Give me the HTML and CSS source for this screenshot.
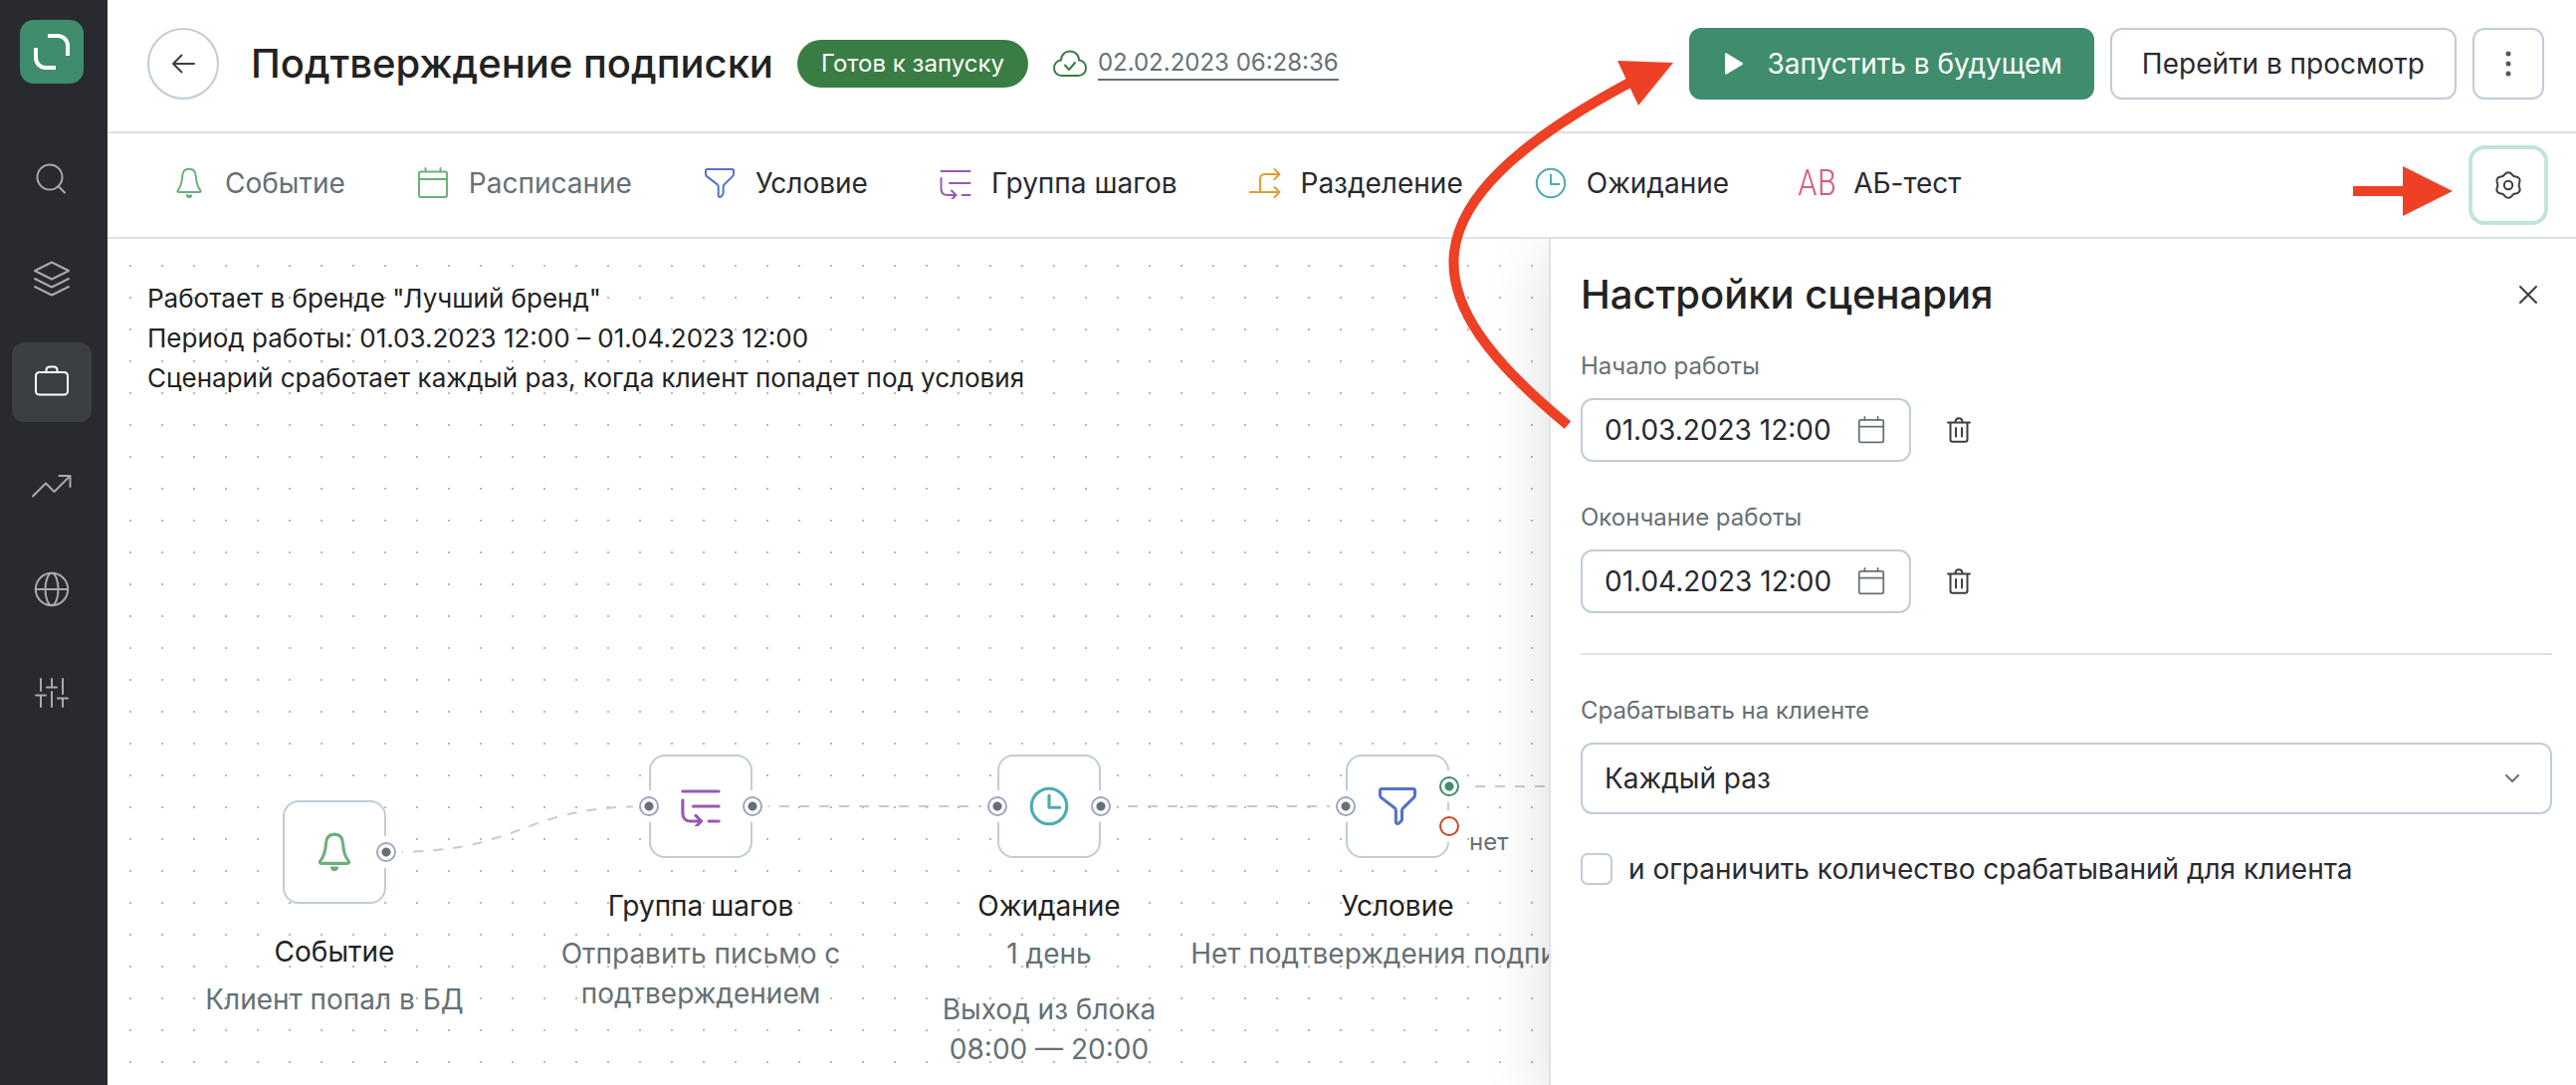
FILE: index.html
```html
<!DOCTYPE html>
<html lang="ru">
<head>
<meta charset="utf-8">
<meta name="viewport" content="width=device-width, initial-scale=1">
<title>Подтверждение подписки</title>
<link rel="stylesheet" href="styles.css">
</head>
<body>
<svg class="sprite" aria-hidden="true">
  <symbol id="i-bell" viewBox="0 1 32 32"><path d="M16 2.700c-4.800 0-6.600 3.300-6.800 7.300-.4 7-1.400 10.200-4.500 14.100-.8 1-.3 2 .8 2h21c1.100 0 1.600-1 .8-2-3.100-3.900-4.100-7.100-4.500-14.100-.2-4-2-7.300-6.800-7.300z"/><path d="M13.200 29h5.600a2.800 2.800 0 0 1-5.600 0z" fill="currentColor" stroke-width="1"/></symbol>
  <symbol id="i-cal" viewBox="0 0 32 32"><rect x="2" y="4.500" width="28" height="25.500" rx="2"/><path d="M2 12h28M8.500 1v3.500M23.500 1v3.500"/></symbol>
  <symbol id="i-filter" viewBox="0 0 32 32"><path d="M3.500 2h25c1 0 1.500.6 1.500 1.500v3.200c0 1-.3 1.700-1 2.400l-8.500 8.400c-.6.600-.9 1.200-.9 2.100v6.500c0 .8-.2 1.300-.8 1.900l-1.500 1.500c-1 1-2.600.4-2.600-1v-9c0-.9-.3-1.500-.9-2.100L3 9.100c-.7-.7-1-1.400-1-2.400V3.500C2 2.600 2.500 2 3.500 2z"/></symbol>
  <symbol id="i-group" viewBox="0 0 32 32"><path d="M1.500 4h29M10 16h20.500M22.500 28h8M1.500 11v10.500c0 4 2.500 6.500 6.500 6.500h8M12 23.500l4.500 4.500-4.500 4.500"/></symbol>
  <symbol id="i-split" viewBox="0 0 32 32"><path d="M0 25h30M11 25V12c0-3 2-5 5-5h14M25.500 2l5 5-5 5M25.500 20l5 5-5 5"/></symbol>
  <symbol id="i-clock" viewBox="0 0 32 32"><circle cx="16" cy="16" r="14.200"/><path d="M16 7.500V17h8.500"/></symbol>
  <symbol id="i-trash" viewBox="0 0 32 32"><path d="M5 8.500h22M7.500 8.500v17c0 1.400.8 2.200 2.200 2.200h12.600c1.400 0 2.200-.8 2.200-2.200v-17M12.500 8c0-2.500 1.300-3.700 3.500-3.700s3.500 1.200 3.500 3.700M13 14v8.500M19 14v8.500"/></symbol>
</svg>

<div class="app">
  <nav class="sidebar" aria-label="Разделы">
    <a class="logo" href="#" aria-label="Главная"><svg viewBox="0 0 64 64" width="64" height="64"><path d="M28 16h10a10 10 0 0 1 10 10v10M16 28v10a10 10 0 0 0 10 10h10"/></svg></a>
    <a class="side-link" href="#" aria-label="Поиск"><svg viewBox="0 0 40 40" width="40" height="40"><circle cx="18" cy="22" r="12.500"/><path d="M26.500 31l6.500 6.500"/></svg></a>
    <a class="side-link" href="#" aria-label="Слои"><svg viewBox="0 0 40 40" width="40" height="40"><path d="M20 3.500l17 8.500-17 8.500L3 12zM3 20l17 8.500L37 20M3 28l17 8.500L37 28"/></svg></a>
    <a class="side-link side-link--active" href="#" aria-label="Кампании"><svg viewBox="0 0 40 40" width="40" height="40"><rect x="4" y="10" width="32" height="22.500" rx="3.500"/><path d="M14.500 10V8c0-2 1.500-3.500 3.500-3.500h4c2 0 3.500 1.500 3.500 3.500v2"/></svg></a>
    <a class="side-link" href="#" aria-label="Отчёты"><svg viewBox="0 0 40 40" width="40" height="40"><path d="M1 30.500l13-13 8.500 8.500L38 10.500M27.500 10H38.500V21"/></svg></a>
    <a class="side-link" href="#" aria-label="Сайты"><svg viewBox="0 0 40 40" width="40" height="40"><circle cx="20" cy="20" r="16.200"/><path d="M4 20h32"/><ellipse cx="20" cy="20" rx="6.500" ry="16.200"/></svg></a>
    <a class="side-link" href="#" aria-label="Настройки"><svg viewBox="0 0 40 40" width="40" height="40"><path d="M9 6v12M9 23v11M4 22.500h10M20 6v8M15 14.500h10M20 19v15M31 6v15M31 26v8M26 25.500h10"/></svg></a>
  </nav>

  <main class="main">
    <header class="header">
      <button class="back" type="button" aria-label="Назад"><svg viewBox="0 0 32 32" width="32" height="32"><path d="M27 16H6M14.500 7.500L6 16l8.500 8.500"/></svg></button>
      <h1 class="title">Подтверждение подписки</h1>
      <span class="badge">Готов к запуску</span>
      <div class="saved">
        <svg class="cloud" viewBox="0 0 36 36" width="36" height="36"><path d="M9.500 30h17c4.700 0 7.500-3.700 7.500-7.700 0-4.300-3-7.500-7-7.700C27 9 23 5.500 18 5.500S9 9 9 14.600c-4 .2-7 3.400-7 7.700C2 26.300 4.800 30 9.500 30z"/><path d="M13 19.500l4 4.500 6-7"/></svg>
        <a class="saved-date" href="#">02.02.2023 06:28:36</a>
      </div>
      <div class="actions">
        <button class="btn btn--primary" type="button"><svg viewBox="0 0 24 24" width="24" height="24"><path d="M4 2.500v19c0 1 1 1.500 1.800 1L21.500 13c.8-.5.8-1.500 0-2L5.800 1.500C5 1 4 1.500 4 2.500z"/></svg>Запустить в будущем</button>
        <button class="btn" type="button">Перейти в просмотр</button>
        <button class="btn btn--icon" type="button" aria-label="Ещё"><svg viewBox="0 0 32 32" width="32" height="32"><circle cx="16" cy="6" r="2.500"/><circle cx="16" cy="16" r="2.500"/><circle cx="16" cy="26" r="2.500"/></svg></button>
      </div>
    </header>

    <div class="toolbar">
      <div class="steps">
        <button class="step step--muted" type="button"><svg class="icon c-green"><use href="#i-bell"/></svg>Событие</button>
        <button class="step step--muted" type="button"><svg class="icon c-green"><use href="#i-cal"/></svg>Расписание</button>
        <button class="step" type="button"><svg class="icon c-blue"><use href="#i-filter"/></svg>Условие</button>
        <button class="step" type="button"><svg class="icon c-purple"><use href="#i-group"/></svg>Группа шагов</button>
        <button class="step" type="button"><svg class="icon c-orange"><use href="#i-split"/></svg>Разделение</button>
        <button class="step" type="button"><svg class="icon c-teal"><use href="#i-clock"/></svg>Ожидание</button>
        <button class="step" type="button"><span class="ab" aria-hidden="true">AB</span>АБ-тест</button>
      </div>
      <button class="gear" type="button" aria-label="Настройки сценария"><svg viewBox="0 0 32 32" width="32" height="32"><circle cx="16" cy="16" r="4.200"/><path d="M16 3.200C19.400 3.200 19.200 5.600 21.300 6.800C23.400 8 25.400 6.700 27.100 9.600C28.800 12.500 26.600 13.600 26.600 16C26.600 18.400 28.800 19.500 27.100 22.400C25.400 25.300 23.400 24 21.300 25.200C19.200 26.400 19.400 28.800 16 28.800C12.600 28.800 12.800 26.400 10.700 25.200C8.600 24 6.600 25.300 4.900 22.400C3.200 19.500 5.400 18.400 5.400 16C5.400 13.600 3.200 12.500 4.900 9.600C6.600 6.700 8.600 8 10.700 6.800C12.800 5.600 12.600 3.200 16 3.200z"/></svg></button>
    </div>

    <div class="workspace">
      <section class="canvas" aria-label="Схема сценария">
        <p class="summary">Работает в бренде "Лучший бренд"<br>Период работы: 01.03.2023 12:00 – 01.04.2023 12:00<br>Сценарий сработает каждый раз, когда клиент попадет под условия</p>

        <svg class="edges" width="1800" height="850" aria-hidden="true">
          <path d="M287 616C420 616 412 570 544 570"/>
          <path d="M655 570H894"/>
          <path d="M1005 570H1244"/>
          <path d="M1354 550H1800"/>
        </svg>

        <article class="node node--event">
          <div class="node-box c-green"><svg class="node-icon"><use href="#i-bell"/></svg><i class="port port--out"></i></div>
          <h2 class="node-title">Событие</h2>
          <p class="node-text">Клиент попал в БД</p>
        </article>
        <article class="node node--group">
          <div class="node-box c-purple"><svg class="node-icon"><use href="#i-group"/></svg><i class="port port--in"></i><i class="port port--out"></i></div>
          <h2 class="node-title">Группа шагов</h2>
          <p class="node-text">Отправить письмо с подтверждением</p>
        </article>
        <article class="node node--wait">
          <div class="node-box c-teal"><svg class="node-icon"><use href="#i-clock"/></svg><i class="port port--in"></i><i class="port port--out"></i></div>
          <h2 class="node-title">Ожидание</h2>
          <p class="node-text">1 день</p>
          <p class="node-text node-text--extra">Выход из блока<br>08:00 — 20:00</p>
        </article>
        <article class="node node--condition">
          <div class="node-box c-blue"><svg class="node-icon"><use href="#i-filter"/></svg><i class="port port--in"></i><i class="port port--yes"></i><i class="port port--no"></i><span class="port-label">нет</span></div>
          <h2 class="node-title">Условие</h2>
          <p class="node-text node-text--line">Нет подтверждения подписки</p>
        </article>
      </section>

      <aside class="panel">
        <div class="panel-head">
          <h2 class="panel-title">Настройки сценария</h2>
          <button class="plain" type="button" aria-label="Закрыть"><svg viewBox="0 0 32 32" width="32" height="32"><path d="M8 8l16 16M24 8L8 24"/></svg></button>
        </div>

        <label class="label" for="start">Начало работы</label>
        <div class="date-row">
          <div class="date"><input id="start" type="text" value="01.03.2023 12:00"><svg class="date-icon"><use href="#i-cal"/></svg></div>
          <button class="plain" type="button" aria-label="Очистить начало работы"><svg width="32" height="32"><use href="#i-trash"/></svg></button>
        </div>

        <label class="label label--next" for="end">Окончание работы</label>
        <div class="date-row">
          <div class="date"><input id="end" type="text" value="01.04.2023 12:00"><svg class="date-icon"><use href="#i-cal"/></svg></div>
          <button class="plain" type="button" aria-label="Очистить окончание работы"><svg width="32" height="32"><use href="#i-trash"/></svg></button>
        </div>

        <hr class="divider">

        <label class="label" for="mode">Срабатывать на клиенте</label>
        <div class="select">
          <select id="mode"><option>Каждый раз</option><option>Один раз</option></select>
          <svg class="chevron" viewBox="0 0 32 32" width="32" height="32"><path d="M10 13l6 6 6-6"/></svg>
        </div>

        <label class="check"><input type="checkbox">и ограничить количество срабатываний для клиента</label>
      </aside>
    </div>
  </main>

  <svg class="arrow-curve" viewBox="0 0 260 400" width="260" height="400" aria-hidden="true"><path class="stroke" d="M135 387C-22 258 -33 166 199 42"/><path d="M185 21l56 2-35 43z"/></svg>
  <svg class="arrow-short" viewBox="0 0 100 50" width="100" height="50" aria-hidden="true"><path d="M0 20h50V0l50 25-50 25V30H0z"/></svg>
</div>
</body>
</html>
```
FILE: styles.css
```css
* { box-sizing: border-box; }

body {
  margin: 0;
  background: #fff;
  color: #292a2f;
  font-family: Inter, "Noto Sans", sans-serif;
  font-size: 28px;
  line-height: 40px;
}

h1, h2, p { margin: 0; font-weight: 400; }

button, input, select {
  margin: 0;
  padding: 0;
  border: 0;
  background: none;
  color: inherit;
  font: inherit;
}

svg {
  display: block;
  flex: none;
  fill: none;
  stroke: currentColor;
  stroke-width: 2;
  stroke-linecap: round;
  stroke-linejoin: round;
}

.sprite { position: absolute; width: 0; height: 0; }

.c-green { color: #6bb07c; }
.c-blue { color: #5573c9; }
.c-purple { color: #9859b3; }
.c-orange { color: #e19c38; }
.c-teal { color: #4bacb0; }

.app { position: relative; display: flex; min-height: 100vh; }

/* Sidebar */
.sidebar {
  display: flex;
  flex: none;
  flex-direction: column;
  gap: 24px;
  width: 108px;
  padding: 20px 16px 20px 12px;
  background: #292a2f;
}

.logo {
  align-self: center;
  margin-bottom: 28px;
  border-radius: 14px;
  background: #3f8d6c;
  color: #fff;
}

.logo svg { stroke-width: 4; stroke-linecap: butt; }

.side-link {
  display: flex;
  align-items: center;
  justify-content: center;
  height: 80px;
  border-radius: 12px;
  color: #a9aaad;
}

.side-link--active { background: #3b3e42; color: #fff; }

.main { display: flex; flex: 1; flex-direction: column; min-width: 0; }

/* Header */
.header {
  display: flex;
  align-items: center;
  padding: 28px 32px 32px 40px;
  border-bottom: 2px solid #dce3e6;
}

.back {
  display: flex;
  flex: none;
  align-items: center;
  justify-content: center;
  width: 72px;
  height: 72px;
  border: 2px solid #c1ccd6;
  border-radius: 50%;
  color: #3b3e42;
}

.title {
  margin-left: 32px;
  color: #222;
  font-size: 40px;
  font-weight: 500;
  line-height: 48px;
  white-space: nowrap;
}

.badge {
  margin-left: 24px;
  padding: 8px 24px;
  border-radius: 24px;
  background: #3a7d44;
  color: #fff;
  font-size: 24px;
  line-height: 32px;
  white-space: nowrap;
}

.saved { display: flex; align-items: center; gap: 10px; margin-left: 24px; }
.cloud { color: #3a7d44; }

.saved-date {
  border-bottom: 2px solid #667075;
  color: #667075;
  font-size: 24px;
  line-height: 32px;
  text-decoration: none;
  white-space: nowrap;
}

.actions { display: flex; gap: 16px; margin-left: auto; }

.btn {
  display: flex;
  align-items: center;
  justify-content: center;
  gap: 22px;
  height: 72px;
  padding: 0 30px;
  border: 2px solid #c1ccd6;
  border-radius: 12px;
  white-space: nowrap;
}

.btn--primary { border-color: #3f8d6c; background: #3f8d6c; color: #fff; }
.btn--primary svg { fill: currentColor; stroke: none; }
.btn--icon { width: 72px; padding: 0; color: #55585c; }
.btn--icon svg { fill: currentColor; stroke: none; }

/* Step toolbar */
.toolbar {
  position: relative;
  z-index: 2;
  display: flex;
  align-items: center;
  justify-content: space-between;
  padding: 12px 28px 12px 66px;
  border-bottom: 2px solid #dce3e6;
  background: #fff;
}

.steps { display: flex; gap: 72px; padding-bottom: 4px; }
.step { display: flex; align-items: center; gap: 20px; white-space: nowrap; }
.step--muted { color: #667075; }

.icon { width: 32px; height: 32px; overflow: visible; }

.ab {
  margin: 0 -3px;
  color: #d15b89;
  font-family: "Liberation Sans Narrow", "Roboto Condensed", Roboto, sans-serif;
  font-size: 36px;
  font-weight: 300;
}

.gear {
  display: flex;
  align-items: center;
  justify-content: center;
  width: 80px;
  height: 80px;
  border: 4px solid #c0e5d8;
  border-radius: 16px;
  color: #3b3e42;
}

/* Scenario canvas */
.workspace { display: flex; flex: 1; overflow: hidden; }

.canvas {
  position: relative;
  flex: 1;
  min-width: 0;
  min-height: 850px;
  padding: 40px;
  overflow: hidden;
  background: radial-gradient(circle at 1px 1px, #b9b9b9 1px, transparent 1px) 22px 26px / 32px 32px;
}

.summary { color: #222; font-size: 26px; white-space: nowrap; }

.edges {
  position: absolute;
  top: 0;
  left: 0;
  color: #c1ccd6;
  stroke-dasharray: 10 10;
  stroke-linecap: butt;
}

.node {
  position: absolute;
  top: 518px;
  display: flex;
  flex-direction: column;
  align-items: center;
  width: 304px;
  text-align: center;
}

.node--event { top: 564px; left: 76px; }
.node--group { left: 444px; }
.node--wait { left: 794px; }
.node--condition { left: 1144px; }

.node-box {
  position: relative;
  display: flex;
  align-items: center;
  justify-content: center;
  width: 104px;
  height: 104px;
  border: 2px solid #c1ccd6;
  border-radius: 16px;
  background: #fff;
}

.node-icon { width: 40px; height: 40px; overflow: visible; stroke-width: 2.5; }

.port {
  position: absolute;
  top: 40px;
  width: 20px;
  height: 20px;
  border: 2px solid #9fa4c2;
  border-radius: 50%;
  background: radial-gradient(circle, #667075 4px, #fff 5px);
  box-shadow: 0 0 0 6px #fff;
}

.port--in { left: -12px; }
.port--out, .port--yes, .port--no { right: -12px; }
.port--yes { top: 20px; border-color: #3f8d6c; background: radial-gradient(circle, #3f8d6c 4px, #fff 5px); }
.port--no { top: 60px; border-color: #cf4427; background: #fff; }

.port-label {
  position: absolute;
  top: 70px;
  left: 122px;
  color: #667075;
  font-size: 24px;
  line-height: 32px;
}

.node-title { margin-top: 28px; color: #222; font-size: 28px; }
.node-text { margin-top: 8px; color: #667075; }
.node-text--extra { margin-top: 16px; }
.node-text--line { white-space: nowrap; }

/* Settings panel */
.panel {
  position: relative;
  flex: none;
  width: 1032px;
  max-width: 60%;
  padding: 32px 24px 32px 30px;
  border-left: 2px solid #dce3e6;
  background: #fff;
  box-shadow: 0 16px 64px rgba(0, 0, 0, 0.14);
}

.panel-head { display: flex; justify-content: space-between; margin-bottom: 32px; }
.panel-title { color: #222; font-size: 40px; font-weight: 500; line-height: 48px; }

.plain {
  display: flex;
  align-items: center;
  justify-content: center;
  width: 48px;
  height: 48px;
  color: #3b3e42;
}

.label {
  display: block;
  margin-bottom: 16px;
  color: #667075;
  font-size: 24px;
  line-height: 32px;
}

.label--next { margin-top: 40px; }

.date-row { display: flex; align-items: center; gap: 24px; }

.date {
  display: flex;
  align-items: center;
  width: 332px;
  height: 64px;
  padding: 0 22px;
  border: 2px solid #c1ccd6;
  border-radius: 12px;
}

.date input { flex: 1; min-width: 0; }
.date-icon { width: 28px; height: 28px; margin-right: 2px; color: #667075; }

.divider { height: 2px; margin: 40px 0; border: 0; background: #dce3e6; }

.select { position: relative; }

.select select {
  width: 100%;
  height: 72px;
  padding: 0 22px;
  border: 2px solid #c1ccd6;
  border-radius: 12px;
  background: #fff;
  appearance: none;
}

.chevron {
  position: absolute;
  top: 20px;
  right: 24px;
  color: #667075;
  pointer-events: none;
}

.check { display: flex; align-items: center; gap: 16px; margin-top: 35px; }

.check input {
  flex: none;
  width: 32px;
  height: 32px;
  border: 2px solid #c1ccd6;
  border-radius: 7px;
  appearance: none;
}

/* Callout arrows drawn over the interface */
.arrow-curve, .arrow-short {
  position: absolute;
  z-index: 3;
  fill: #ed4024;
  stroke: none;
  pointer-events: none;
}

.arrow-curve { top: 40px; right: 888px; }
.arrow-curve .stroke { fill: none; stroke: #ed4024; stroke-width: 10; stroke-linecap: butt; }
.arrow-short { top: 167px; right: 124px; }
```
